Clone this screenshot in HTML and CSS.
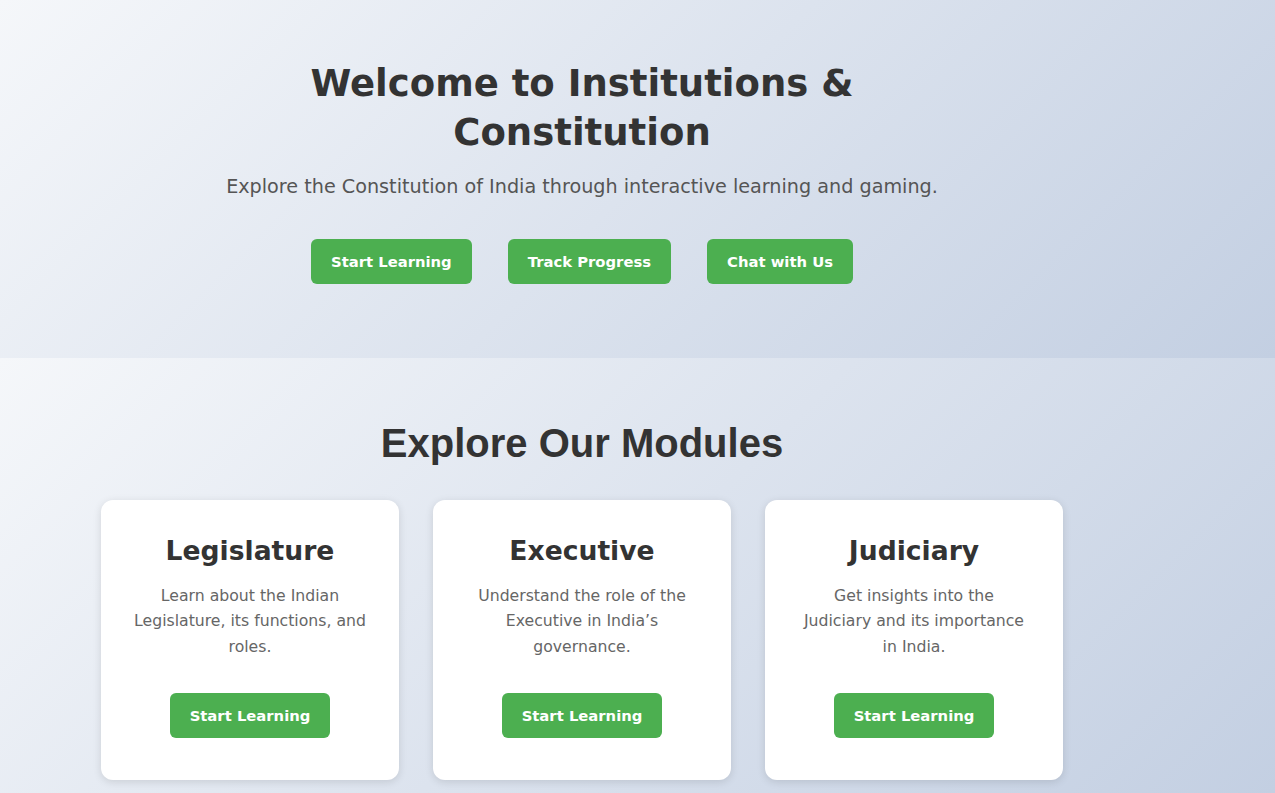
FILE: index.html
```html
<!DOCTYPE html>
<html lang="en">
<head>
<meta charset="utf-8">
<title>Institutions &amp; Constitution</title>
<link rel="stylesheet" href="styles.css">
</head>
<body>
  <section class="hero">
    <div class="inner">
      <h1 class="hero-title">Welcome to Institutions &amp;<br>Constitution</h1>
      <p class="hero-sub">Explore the Constitution of India through interactive learning and gaming.</p>
      <div class="hero-actions">
        <a class="btn" href="#">Start Learning</a>
        <a class="btn" href="#">Track Progress</a>
        <a class="btn" href="#">Chat with Us</a>
      </div>
    </div>
  </section>
  <section class="modules">
    <div class="inner">
      <h2 class="modules-title">Explore Our Modules</h2>
      <div class="cards">
        <div class="card">
          <h3 class="card-title">Legislature</h3>
          <p class="card-text">Learn about the Indian Legislature, its functions, and roles.</p>
          <a class="btn" href="#">Start Learning</a>
        </div>
        <div class="card">
          <h3 class="card-title">Executive</h3>
          <p class="card-text">Understand the role of the Executive in India’s governance.</p>
          <a class="btn" href="#">Start Learning</a>
        </div>
        <div class="card">
          <h3 class="card-title">Judiciary</h3>
          <p class="card-text">Get insights into the<br>Judiciary and its importance in India.</p>
          <a class="btn" href="#">Start Learning</a>
        </div>
      </div>
    </div>
  </section>
</body>
</html>
```
FILE: styles.css
```css
* { box-sizing: border-box; }
html, body { margin: 0; padding: 0; }
body {
  font-family: "DejaVu Sans", "Noto Sans", sans-serif;
  color: #333;
  background: #dfe5ef;
}
.inner {
  width: 1164px;
}
.hero {
  height: 358px;
  background: linear-gradient(135deg, #f5f7fa 0%, #c3cfe2 100%);
  text-align: center;
  padding-top: 59px;
}
.hero-title {
  margin: 0;
  font-size: 37px;
  line-height: 49px;
  font-weight: 700;
  color: #333;
}
.hero-sub {
  margin: 18px 0 0;
  font-size: 19.2px;
  line-height: 24px;
  color: #555;
}
.hero-actions {
  margin-top: 40px;
  display: flex;
  justify-content: center;
  gap: 36px;
}
.btn {
  display: inline-block;
  background: #4caf50;
  color: #fff;
  text-decoration: none;
  font-weight: 700;
  font-size: 14.8px;
  line-height: 21px;
  padding: 12px 20px;
  border-radius: 6px;
}
.modules {
  background: linear-gradient(135deg, #f5f7fa 0%, #c3cfe2 100%);
  padding-top: 62px;
  min-height: 435px;
}
.modules-title {
  margin: 0;
  text-align: center;
  font-family: "Liberation Sans", Arial, sans-serif;
  font-size: 40px;
  line-height: 46px;
  font-weight: 700;
  color: #333;
}
.cards {
  margin-top: 34px;
  display: flex;
  justify-content: center;
  gap: 34px;
}
.card {
  width: 298px;
  height: 280px;
  background: #fff;
  border-radius: 12px;
  box-shadow: 0 2px 8px rgba(0, 0, 0, 0.12);
  text-align: center;
  padding: 31px 31px 42px;
  display: flex;
  flex-direction: column;
  align-items: center;
}
.card-title {
  margin: 0;
  font-size: 26.6px;
  line-height: 40px;
  font-weight: 700;
  color: #333;
}
.card-text {
  margin: 12px 0 0;
  font-size: 15.7px;
  line-height: 25.4px;
  color: #666;
}
.card .btn {
  margin-top: auto;
}
```
